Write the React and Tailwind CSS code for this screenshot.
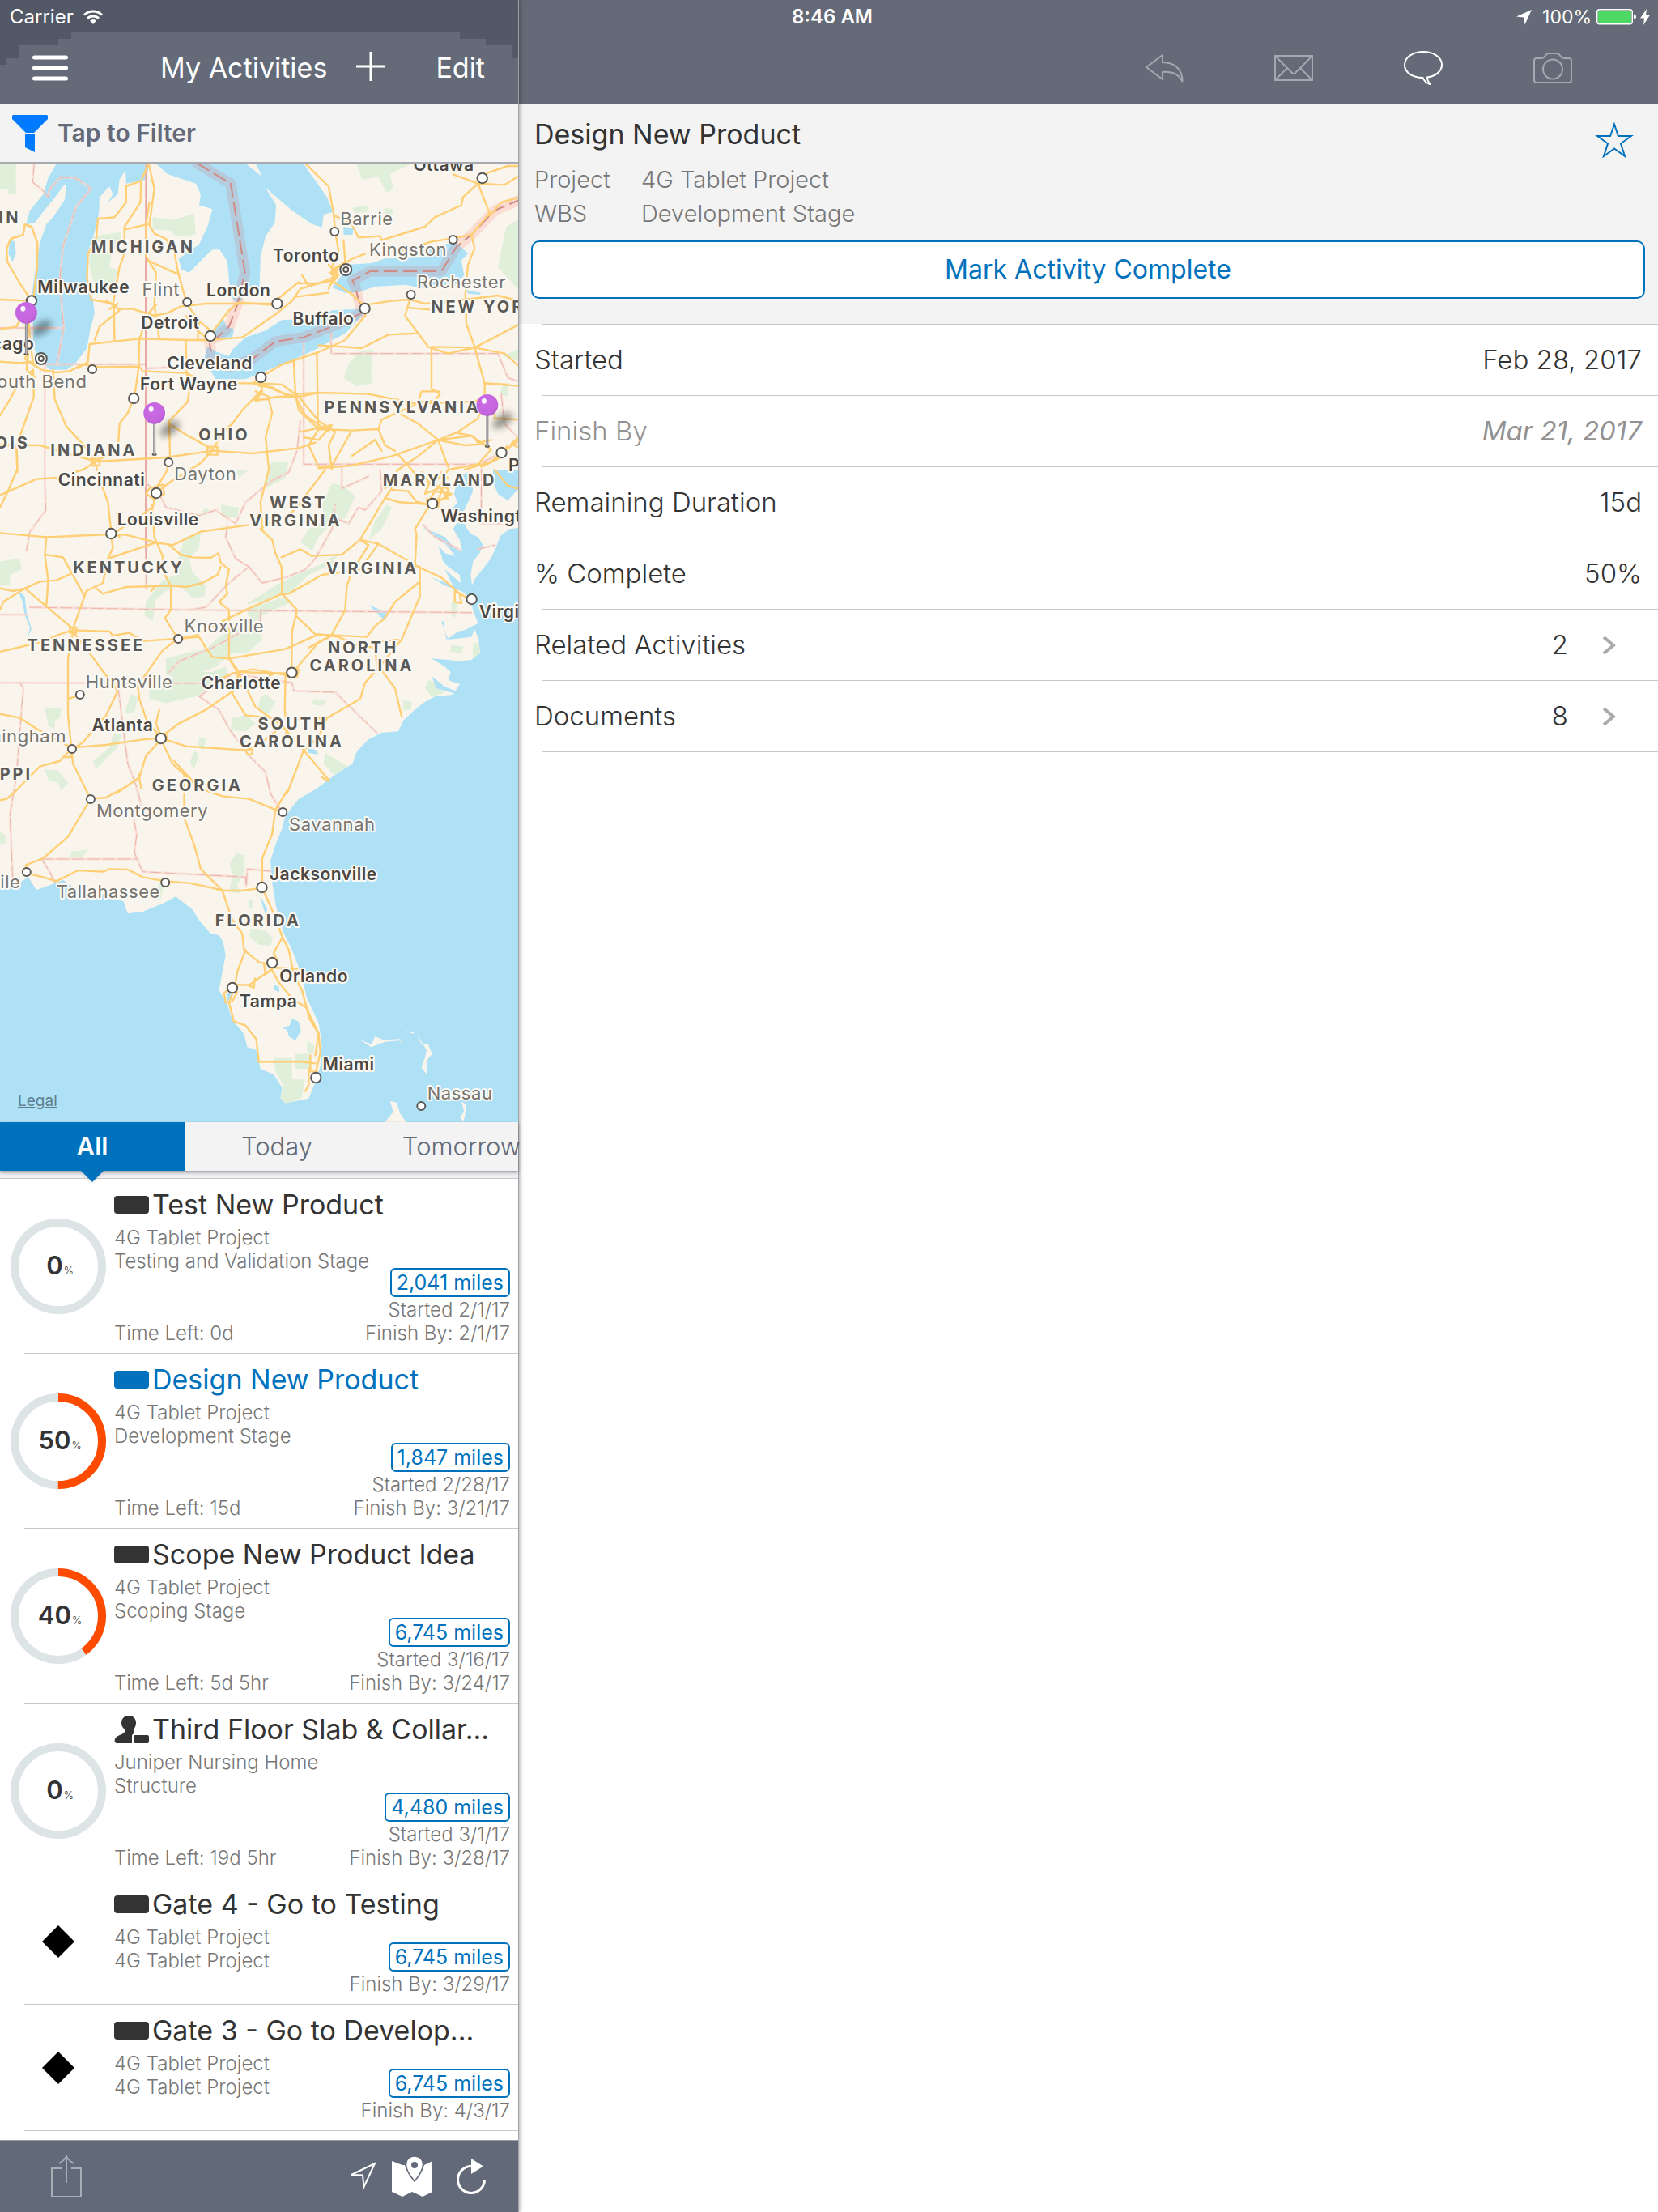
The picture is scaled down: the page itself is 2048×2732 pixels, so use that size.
import { useState } from 'react';

const TABS = ['All', 'Today', 'Tomorrow'];

const ACTIVITIES = [
  { id: 1, name: 'Test New Product', project: '4G Tablet Project', wbs: 'Testing and Validation Stage', percent: 0, distance: '2,041 miles', started: '2/1/17', finish: '2/1/17', timeLeft: '0d' },
  { id: 2, name: 'Design New Product', project: '4G Tablet Project', wbs: 'Development Stage', percent: 50, distance: '1,847 miles', started: '2/28/17', finish: '3/21/17', timeLeft: '15d' },
  { id: 3, name: 'Scope New Product Idea', project: '4G Tablet Project', wbs: 'Scoping Stage', percent: 40, distance: '6,745 miles', started: '3/16/17', finish: '3/24/17', timeLeft: '5d 5hr' },
  { id: 4, name: 'Third Floor Slab & Collar...', project: 'Juniper Nursing Home', wbs: 'Structure', percent: 0, distance: '4,480 miles', started: '3/1/17', finish: '3/28/17', timeLeft: '19d 5hr', assigned: true },
  { id: 5, name: 'Gate 4 - Go to Testing', project: '4G Tablet Project', wbs: '4G Tablet Project', milestone: true, distance: '6,745 miles', finish: '3/29/17' },
  { id: 6, name: 'Gate 3 - Go to Develop...', project: '4G Tablet Project', wbs: '4G Tablet Project', milestone: true, distance: '6,745 miles', finish: '4/3/17' },
];

const DETAILS = [
  { label: 'Started', value: 'Feb 28, 2017' },
  { label: 'Finish By', value: 'Mar 21, 2017', muted: true },
  { label: 'Remaining Duration', value: '15d' },
  { label: '% Complete', value: '50%' },
  { label: 'Related Activities', value: '2', link: true },
  { label: 'Documents', value: '8', link: true },
];

// Map geometry is kept in its own units, MAP_X / MAP_Y turn them into pixels
const MAP_X = 0.41;
const MAP_Y = 1 / 3;
const MAP_TOP = 36;
const px = (u) => u * MAP_X;
const py = (v) => (v - MAP_TOP) * MAP_Y;

const WATER = [
  // Atlantic and Gulf
  'M1566 1385 1535 1390 1508 1415 1492 1465 1478 1500 1460 1530 1440 1560 1428 1580 1422 1600 1418 1560 1425 1510 1445 1480 1455 1450 1440 1420 1420 1410 1402 1380 1395 1330 1410 1290 1425 1250 1420 1205 1405 1180 1390 1195 1375 1225 1368 1260 1378 1290 1360 1320 1380 1360 1365 1390 1385 1430 1392 1470 1370 1460 1340 1420 1305 1400 1275 1385 1310 1420 1345 1450 1372 1490 1340 1480 1320 1450 1335 1510 1350 1530 1385 1560 1388 1590 1340 1540 1365 1600 1300 1570 1340 1600 1390 1620 1415 1645 1425 1690 1440 1740 1400 1765 1380 1770 1345 1800 1335 1730 1330 1735 1350 1800 1420 1790 1430 1760 1442 1800 1447 1850 1420 1875 1380 1880 1350 1875 1300 1870 1340 1900 1358 1920 1350 1950 1385 1965 1372 1990 1340 1975 1300 1935 1315 1980 1370 2000 1360 2005 1310 2010 1275 2035 1245 2065 1215 2100 1200 2140 1150 2145 1110 2170 1075 2215 1062 2260 1010 2300 950 2355 900 2390 880 2420 858 2460 850 2500 830 2560 815 2620 820 2700 832 2790 852 2880 880 2950 905 3030 925 3130 960 3220 970 3300 965 3380 950 3440 930 3500 900 3508 860 3518 845 3500 850 3460 825 3412 785 3390 772 3320 745 3310 735 3260 700 3210 685 3150 660 3100 670 3030 680 2970 672 2920 660 2895 635 2890 600 2840 580 2800 530 2752 495 2775 430 2808 385 2815 372 2770 320 2745 240 2735 190 2690 150 2710 110 2728 85 2680 60 2700 0 2705V3590H1566Z',
  // Lake Michigan with Green Bay
  'M170 36 145 90 130 150 90 210 78 262 105 255 130 215 160 170 190 120 200 110 195 170 160 235 140 260 120 330 108 420 98 500 92 580 102 650 98 710 120 765 150 800 200 800 225 780 262 720 272 650 285 590 280 540 265 480 262 375 285 290 298 220 300 160 330 120 340 150 325 180 355 150 360 95 378 60 380 110 440 95 450 36Z',
  // Lake Huron and Georgian Bay
  'M470 36 505 75 590 110 605 150 600 190 640 205 625 270 600 335 560 370 538 390 548 430 570 440 610 390 640 355 662 355 685 400 695 530 722 560 740 500 782 495 785 380 800 305 828 255 832 190 800 125 880 210 940 260 970 272 975 225 1003 215 985 160 930 65 915 36H770L790 85 740 36Z',
  // Lake Erie
  'M625 715 612 770 640 815 650 835 740 835 800 805 880 765 950 725 1040 665 1098 590 1080 575 1000 580 960 612 850 615 800 655 740 680 700 725 690 750 655 735Z',
  'M640 660 672 610 682 640 705 650 700 680 650 680Z',
  // Lake Ontario
  'M1050 410 1120 405 1160 388 1265 385 1300 350 1370 325 1410 370 1390 395 1398 450 1370 488 1285 500 1220 485 1130 492 1080 512 1040 515 1000 495 1030 450Z',
  'M1035 270 1065 275 1062 300 1035 300Z',
  'M30 320 45 325 48 370 38 400 25 370Z',
  'M1405 505 1450 515 1445 522 1410 518Z',
  // Okeechobee and Tampa Bay
  'M880 3205 900 3215 907 3250 890 3285 870 3270 865 3245 850 3240 872 3230Z',
  'M682 3110 700 3105 700 3125 685 3140Z',
  'M825 3080 840 3085 842 3105 828 3100Z',
  // carolina and tennessee reservoirs
  'M925 2200 955 2210 958 2225 930 2220Z',
  'M55 1620 75 1640 80 1700 95 1760 85 1790 90 1755 75 1710 68 1660Z',
  'M785 2750 805 2800 800 2820 790 2780Z',
  'M1485 1170 1566 1170 1566 1235 1530 1285 1500 1260 1485 1215Z',
  'M1110 1670 1165 1700 1155 1725 1135 1700Z',
];

const ISLANDS = [
  'M1085 3283 1118 3310 1160 3290 1208 3285 1212 3310 1205 3280 1155 3283 1130 3270 1120 3300Z',
  'M1255 3260 1270 3300 1290 3300 1302 3335 1285 3360 1285 3410 1270 3385 1280 3350 1285 3320Z',
  'M1175 3510 1195 3515 1205 3555 1225 3590H1158L1185 3550Z',
  'M1390 3510 1405 3525 1400 3570 1395 3585 1385 3570 1398 3550Z',
  'M1220 3250 1248 3255 1245 3260Z',
];

const PARKS = [
  'M0 36H48V150H25V130H0Z',
  'M1075 36H1240L1175 75 1185 130 1165 145 1140 85 1090 95Z',
  'M460 235 520 245 585 222 590 300 530 305 515 285 460 280Z',
  'M280 305 365 290 360 345 330 355 335 380 330 420 355 430 340 500 280 470 268 400Z',
  'M1525 270 1566 240V510L1500 420Z',
  'M1062 200 1110 190 1105 215 1068 220Z',
  'M1158 200 1185 205 1182 225 1158 222Z',
  'M1085 730 1125 725 1118 790 1120 850 1075 860 1035 830 1050 780Z',
  'M820 1140 870 1140 860 1200 800 1240 800 1190Z',
  'M710 1170 750 1170 720 1200Z',
  'M1000 1220 1035 1230 1070 1270 1040 1350 990 1380 960 1420 940 1470 905 1440 930 1390 980 1360 970 1300Z',
  'M1165 1300 1180 1310 1150 1390 1110 1430 1130 1360Z',
  'M665 1300 720 1310 715 1350 670 1345Z',
  'M620 1310 632 1320 615 1340 605 1330Z',
  'M560 1420 605 1400 600 1460 570 1500 580 1550 620 1600 615 1640 580 1645 540 1600 500 1620 470 1650 460 1730 435 1710 440 1660 490 1580 530 1560 540 1480Z',
  'M0 1510 60 1500 65 1540 30 1560 30 1600 0 1600Z',
  'M1020 1480 1000 1520 930 1560 880 1620 820 1650 740 1670 830 1600 900 1555 960 1525Z',
  'M740 1690 860 1640 880 1660 790 1710 785 1730 760 1730Z',
  'M500 1870 560 1850 620 1835 660 1790 690 1770 730 1760 780 1740 790 1800 745 1850 700 1850 650 1900 590 1930 560 1950 500 1930Z',
  'M450 1980 560 1920 640 1920 680 1900 690 1950 640 1980 590 2010 500 2035 450 2020Z',
  'M395 2000 415 2015 405 2070 375 2075Z',
  'M135 2050 185 2055 180 2090 165 2100 165 2130 145 2120Z',
  'M340 2150 365 2150 355 2200 320 2240 290 2280 280 2250 330 2200Z',
  'M135 2280 175 2285 205 2330 185 2360 175 2330 145 2320Z',
  'M800 2000 830 2030 810 2075 775 2060 785 2015Z',
  'M700 2090 740 2080 770 2110 740 2140 695 2135Z',
  'M600 2160 622 2170 612 2210 598 2190Z',
  'M945 2020 985 2025 970 2045 940 2040Z',
  'M1290 1950 1335 1970 1335 2000 1300 2010 1280 1980Z',
  'M1215 2025 1240 2030 1238 2060 1215 2060Z',
  'M980 2220 1050 2270 1005 2300 975 2260Z',
  'M1425 1810 1445 1815 1445 1860 1425 1865Z',
  'M1360 1820 1395 1825 1390 1850 1355 1845Z',
  'M1360 1660 1380 1665 1370 1720 1360 1710Z',
  'M585 2210 600 2225 585 2280 572 2255Z',
  'M712 2590 735 2600 735 2665 715 2710 725 2740 690 2735 700 2680 692 2630Z',
  'M748 2760 763 2765 760 2795 748 2790Z',
  'M215 2585 265 2578 245 2610 212 2605Z',
  'M755 2870 800 2880 822 2905 815 2935 780 2930 752 2900Z',
  'M825 3350H880V3430H918L910 3495 870 3518 845 3510 852 3450 830 3400Z',
  'M890 3335H932V3390H890Z',
  'M925 3285 948 3305 942 3340 925 3325Z',
  'M480 2700 492 2715 485 2760 462 2770Z',
  'M0 2510 18 2525V2555H0Z',
  'M1512 860 1530 850 1530 900 1505 890Z',
  'M1515 750 1566 720V770Z',
];

const ROADS = [
  // great lakes west
  'M75 262 95 270 113 330 112 420 100 540 85 600 90 690 100 780 125 800 170 810 210 805 250 780 300 790 420 788 430 805 560 812 590 830',
  'M75 262 70 300 32 315 20 350 22 400 60 480 95 545 65 600 50 640 0 650',
  'M0 540 95 545 M0 770 60 775 100 770 M100 800 60 840 30 910 0 970 M100 800 102 900 85 960 50 1080 52 1170 20 1260 0 1310',
  'M160 800 165 910 200 1010 260 1090 285 1140 310 1240 325 1290 335 1400',
  'M270 705 265 770 235 795 M270 705 420 685 570 690 630 690 730 680 835 590 880 545 905 500 960 480 1000 470',
  'M345 690 343 560 320 550 275 540 262 460 265 370 290 315 295 240 345 235 380 180 380 120 425 100 448 36 465 130 450 260 375 280',
  'M425 100 423 180 375 270 375 370 360 420 340 560 360 575 400 575 465 600 505 590 545 565 620 555 820 555 900 475 M450 180 440 260 440 380 470 440 465 560 480 685',
  'M448 260 465 295 500 315 525 360 535 430 550 500 565 560 600 620 640 660 M445 395 535 445 M640 660 690 580 720 550 820 560',
  'M560 690 562 800 570 880 565 920 510 990 512 1120 M420 680 418 790 405 900 385 960 360 1000 355 1100 285 1140',
  'M600 620 595 690 630 690 590 650 560 600 M470 560 440 600 430 650 420 690',
  'M320 545 345 560 360 580 340 600 300 640 285 690 M330 575 355 555',
  'M85 740 80 800 105 830 M95 700 75 760 110 790 M52 1080 0 1078 M50 1080 52 1180',
  // ontario
  'M920 36 990 120 1005 220 1010 290 1020 360 1000 420 1005 460 990 500 M1035 320 1040 400 1010 430 1000 470 1060 520 1095 560 M1010 230 1060 260 1080 310 1145 305 1150 320 1280 270 1310 235 1390 190 1395 160 1440 110',
  'M1365 76 1440 110 1520 115 1566 80 M1440 110 1475 220 1420 300 1370 312 1300 325 1250 345 1190 365 M1440 110 1470 70 1530 45 1566 45 M1566 160 1510 180 1475 230',
  'M1000 430 1060 390 1100 370 M1000 460 960 480 900 480 M990 515 890 530 M1420 300 1430 350 1410 410 1402 520 1405 630 1430 715',
  'M990 410 1020 450 1000 480 M910 450 930 490 M995 440 1015 430 1010 460Z',
  // new york and pennsylvania
  'M785 828 850 780 960 735 1040 690 1100 600 1100 560 1180 545 1235 540 1280 555 1400 540 1500 525 1566 545',
  'M1235 540 1220 600 1260 665 1290 715 1350 740 1430 718 1520 740 1566 790 M1260 665 1170 670 1090 720 1000 712 960 710 M1566 630 1490 680 1430 718 1460 850 1560 860',
  'M1430 718 1300 715 M1300 715 1300 870 1325 890 1310 915 1260 920 1270 880 1325 880 M885 770 890 890 960 885 1110 890 1250 925 1400 920 1460 910 1460 850 1530 855',
  'M955 735 958 1020 M960 1020 1060 1025 1140 1020 1150 985 1250 930 M890 890 900 950 960 1020 930 1080 960 1160 1000 1155 1060 1025',
  'M1460 910 1440 980 1380 1030 1320 1060 1260 1000 1200 960 M1320 1060 1420 1045 1480 1095 M1320 1060 1350 1160 M1320 1060 1260 1120 1200 1170 1160 1240 M1140 1020 1160 1080 1190 1100',
  'M1320 1060 1180 1120 1060 1155 960 1165 M1490 920 1490 980 1566 985 M1480 1095 1440 1150 1350 1170 1320 1240 M1566 1060 1520 1100 1480 1140 1400 1170',
  'M890 900 920 970 990 1030 M905 1030 1000 1005 960 1060 915 1050 M1230 570 1300 578 M1060 1120 1130 1060 1150 1100 M1320 1060 1400 1080 1460 1075 M1380 1035 1425 1045 1440 1070 1480 1060',
  'M1566 1045 1540 1075 1566 1090 M1530 1080 1500 1130 1450 1160 M1200 1115 1240 1170 1260 1200',
  // ohio
  'M785 828 760 850 800 860 860 890 900 900 960 885 M785 828 790 880 770 915 835 900 895 900 M785 880 730 950 700 1000 670 1030 640 1100 M765 910 810 910 820 960 800 1050 810 1170 785 1290 790 1390',
  'M720 850 780 850 850 855 900 900 960 990 1010 1030 990 1080 1000 1170 M0 1078 120 1080 290 1140 500 1125 640 1100 760 1110 900 1090 950 1070',
  'M510 1000 560 1040 640 1095 M500 1125 505 1170 475 1230 470 1260 M640 1100 600 1150 520 1210 475 1250 M290 1140 250 1170 170 1200 110 1205 0 1265',
  'M625 1085 655 1085 655 1115 625 1115Z M275 1130 300 1130 300 1155 275 1155Z',
  'M450 1240 490 1225 495 1260 465 1280 440 1260Z M780 860 820 865 870 900 M770 880 810 900',
  // kentucky
  'M0 1405 140 1420 330 1410 380 1412 470 1440 520 1450 605 1400 750 1375 M470 1260 460 1310 350 1400 M458 1300 465 1420 490 1490 492 1550 515 1600 515 1690 497 1720 535 1795',
  'M510 1450 545 1485 580 1495 635 1497 658 1480 665 1515 690 1540 680 1600 685 1630 660 1660 690 1690 690 1720 M335 1410 340 1460 325 1500 310 1590 260 1620 220 1760 M325 1500 470 1440',
  'M665 1530 655 1560 610 1590 560 1605 515 1600 380 1605 310 1630 290 1610 M135 1485 190 1495 255 1640 M140 1420 135 1485 145 1580 140 1670 M0 1610 40 1620 75 1610 120 1585 170 1580 215 1555',
  'M75 1610 220 1760 M75 1610 10 1660 0 1690 M785 1390 820 1430 830 1480 848 1530 850 1630 895 1690 880 1770 878 1925 M848 1495 905 1465 940 1490 1030 1485 1085 1430 1160 1275 1180 1240',
  'M785 1390 810 1370 870 1340 900 1300 980 1170 M455 1620 470 1600 M340 1390 360 1420',
  // virginia
  'M1085 1430 1140 1445 1260 1530 1330 1570 1385 1630 1415 1650 M1085 1430 1110 1450 1060 1550 1045 1600 1040 1690 1000 1780 M1250 1530 1255 1410 1250 1390 1285 1320 1300 1300 1200 1290 1160 1275',
  'M1180 1245 1230 1250 1255 1290 1300 1300 1360 1260 1310 1250 1290 1290 M1320 1300 1330 1240 1350 1280 M1140 1445 1085 1540 970 1560 870 1630 850 1630 740 1690 690 1720 620 1760 590 1785 540 1797',
  'M1260 1590 1190 1660 1160 1720 1130 1750 1105 1790 950 1780 890 1710 M1265 1530 1265 1640 1210 1800 1150 1890 M1370 1620 1385 1630 1390 1665 1370 1660Z',
  'M1350 1200 1300 1200 1280 1260 1320 1240 M1490 1170 1530 1230 1560 1240',
  'M1310 1230 1350 1240 1345 1275 1320 1285 M1330 1180 1300 1230 1270 1180 M1285 1280 1320 1280 1320 1310 1290 1310Z',
  // tennessee and carolinas
  'M0 1845 120 1810 180 1780 220 1765 330 1770 340 1785 390 1775 430 1805 535 1797 600 1790 620 1830 640 1865 690 1870 860 1835 960 1780',
  'M220 1770 205 1870 205 2080 215 2200 M220 1770 270 1850 330 1950 355 1990 320 2080 250 2180 215 2210 M535 1797 490 1840 415 1970 420 2020 445 2110 485 2160 M205 2020 240 2005',
  'M690 1720 690 1870 720 1920 830 1925 880 1925 M880 1925 960 1810 1000 1785 M960 1780 1020 1790 1070 1820 1130 1830 1135 1890 1190 1980 1210 2085 M1200 1800 1130 1810',
  'M720 1920 700 2000 740 2080 820 2090 M690 1870 730 1950 770 2050 850 2120 915 2210 990 2320 M860 1925 858 2060 865 2140 855 2160 M880 1925 830 1925 720 1975 620 2060 540 2110 485 2160',
  'M1150 1890 1100 1960 1085 2020 1000 2080 985 2090 900 2095 M985 2090 960 2160 915 2210 865 2370 M850 2120 790 2180 750 2210 M480 2060 470 2110 485 2160 M930 1830 990 1790',
  'M640 1960 700 1925 760 1910 880 1935 M210 1755 230 1755 230 1775 210 1775Z M870 1910 900 1910 895 1940 870 1940Z',
  // georgia and alabama
  'M0 2075 60 2090 110 2130 215 2200 320 2190 430 2170 485 2165 560 2195 740 2210 M485 2170 440 2230 420 2310 350 2370 M485 2170 520 2260 600 2350 670 2380 750 2390 850 2440',
  'M215 2205 180 2250 120 2270 40 2370 20 2390 0 2395 M215 2205 220 2260 273 2390 320 2385 380 2345 M273 2390 205 2530 130 2610 78 2635 78 2660 M555 2300 555 2460 585 2560 605 2650 670 2730',
  'M418 2300 425 2350 M865 2360 830 2430 820 2520 790 2610 790 2710 M78 2665 130 2680 170 2695 235 2655 310 2660 330 2650 385 2652 430 2680 498 2695 570 2702 640 2720 670 2730 730 2730 790 2720',
  'M525 2250 600 2350 M740 2205 760 2205 760 2225 745 2225Z M970 2310 990 2325',
  'M470 2150 500 2150 505 2175 480 2185Z M190 2235 215 2235 215 2215',
  // florida
  'M670 2730 700 2840 730 2890 735 2950 780 2995 820 3005 M740 2950 715 3030 705 3100 M790 2720 830 2830 850 2900 870 2950 885 3040 910 3100 925 3170 960 3260 965 3330 950 3410 M850 2905 825 2960 835 2990 820 3000',
  'M820 3020 750 3080 705 3078 M820 3025 840 3070 880 3130 925 3165 930 3200 960 3260 950 3340 M820 3015 895 3020 M710 3080 690 3145 705 3215 740 3230 772 3280 780 3365 900 3363 950 3370',
  'M705 3080 675 3110 680 3145 700 3140 715 3105 M935 3340V3400H955 M930 3390 930 3450 920 3473 M795 3000 800 3040 820 3020 M745 3080 765 3090 768 3055',
];

const BORDERS = [
  'M103 36 98 105 125 130 145 160 150 130 182 88 225 88 275 128 230 195 190 340 180 470 192 645 172 780',
  'M0 645H192 M135 780H440V1000 440 1200 430 1300 370 1330 350 1400 300 1440 265 1420 240 1465 215 1460 190 1490 100 1475 70 1500 75 1540 35 1560 30 1610 M135 780V1220L138 1320 90 1400 80 1470',
  'M440 795 500 792 M998 640V740H1500L1530 830 1566 845 M915 680V1150H1440L1475 1130 1566 1060 M905 990 895 1100 870 1180 820 1210 740 1290 710 1370 650 1320 600 1340 500 1310 480 1260 440 1220',
  'M685 1380 680 1420 710 1500 750 1530 690 1590 620 1680 570 1690 M750 1530 790 1590 860 1570 920 1540 950 1500 1000 1390 1010 1300 M1030 1150V1240L1110 1195 M1010 1350 1050 1370 1080 1310 1100 1320 1150 1250 1145 1170',
  'M90 1680 570 1690 1420 1700 M0 1708H80 M785 1695V1730L700 1790 640 1830 540 1880 510 1920 M0 1960 620 1962 M355 1970 385 2260 410 2340 425 2410 402 2460 412 2520 405 2590 430 2660 740 2680 742 2715 745 2650 815 2658',
  'M60 1960 70 1980 50 2300 30 2450 38 2680 M600 2010 650 1970 700 1925 880 1960 885 1990 1010 1995 1135 2145 M600 2010 660 2060 690 2130 750 2230 800 2290 815 2370 845 2430',
  'M125 2613H415 M125 2613 150 2660 165 2700 M1450 1170V1370H1520 M1275 1375 1310 1420 1390 1470 M1440 1465 1490 1450 M1510 890 1520 1000 1566 1060',
];

const SHORE_BORDERS = 'M595 36 695 110 720 300 738 440 715 560 690 640 655 680 630 690 635 730 M635 760 690 790 760 760 830 695 915 680 1000 640 1090 590 1070 490 1062 470 1115 435H1330L1375 345 1420 300 1490 210 1566 170';

// [text, u, v, kind, anchor]
const LABELS = [
  ['Ottawa', 1245, 62, 'city'], ['Barrie', 1025, 265, 'town'], ['Toronto', 822, 398, 'city'], ['Kingston', 1112, 378, 'town'],
  ['Milwaukee', 113, 517, 'city'], ['Flint', 428, 525, 'town'], ['London', 622, 528, 'city'], ['Rochester', 1256, 497, 'town'],
  ['Detroit', 425, 648, 'city'], ['Buffalo', 882, 634, 'city'], ['Chicago', 103, 727, 'city', 'end'], ['South Bend', 262, 867, 'town', 'end'],
  ['Cleveland', 503, 799, 'city'], ['Fort Wayne', 422, 877, 'city'], ['Dayton', 525, 1208, 'town'], ['Cincinnati', 175, 1230, 'city'],
  ['Louisville', 353, 1378, 'city'], ['Washington', 1328, 1364, 'city'], ['Virginia Beach', 1443, 1719, 'city'], ['Knoxville', 555, 1772, 'town'],
  ['Huntsville', 258, 1980, 'town'], ['Charlotte', 607, 1983, 'city'], ['Atlanta', 277, 2138, 'city'], ['Birmingham', 200, 2180, 'town', 'end'],
  ['Montgomery', 290, 2458, 'town'], ['Savannah', 871, 2507, 'town'], ['Jacksonville', 812, 2690, 'city'], ['Mobile', 62, 2720, 'town', 'end'],
  ['Tallahassee', 170, 2757, 'town'], ['Orlando', 842, 3069, 'city'], ['Tampa', 722, 3161, 'city'], ['Miami', 972, 3395, 'city'],
  ['Nassau', 1287, 3503, 'town'], ['Philadelphia', 1532, 1175, 'city'],
  ['WISCONSIN', 62, 258, 'state', 'end'], ['MICHIGAN', 275, 367, 'state'], ['NEW YORK', 1298, 587, 'state'], ['PENNSYLVANIA', 977, 960, 'state'],
  ['OHIO', 598, 1063, 'state'], ['ILLINOIS', 90, 1092, 'state', 'end'], ['INDIANA', 152, 1118, 'state'], ['MARYLAND', 1153, 1230, 'state'],
  ['WEST', 812, 1313, 'state'], ['VIRGINIA', 752, 1379, 'state'], ['KENTUCKY', 220, 1554, 'state'], ['VIRGINIA', 983, 1557, 'state'],
  ['TENNESSEE', 82, 1841, 'state'], ['NORTH', 988, 1850, 'state'], ['CAROLINA', 933, 1916, 'state'], ['SOUTH', 777, 2134, 'state'],
  ['CAROLINA', 722, 2200, 'state'], ['MISSISSIPPI', 98, 2320, 'state', 'end'], ['GEORGIA', 458, 2360, 'state'], ['FLORIDA', 648, 2862, 'state'],
];

const LABEL_STYLES = {
  city: 'fill-[#4a4744] text-[21px] font-semibold tracking-wide',
  town: 'fill-[#76746f] text-[22px] tracking-wide',
  state: 'fill-[#5b5955] text-[20px] font-bold tracking-[3px]',
};

const BIG_DOTS = [[1453, 90], [95, 544], [835, 555], [1099, 573], [634, 675], [786, 828], [403, 906], [1511, 1107], [471, 1257], [1303, 1296], [335, 1407], [1421, 1650], [879, 1922], [485, 2166], [789, 2718], [820, 2997], [700, 3090], [952, 3423]];
const SMALL_DOTS = [[1008, 288], [1365, 318], [564, 549], [1238, 522], [278, 798], [508, 1143], [537, 1797], [241, 2004], [217, 2205], [273, 2391], [852, 2439], [80, 2661], [498, 2700], [1269, 3528]];
const RING_DOTS = [[1042, 429], [124, 759]];
const PINS = [[79, 589], [465, 961], [1468, 931]];

function ActivityMap() {
  return (
    <div className="relative h-[1184px] shrink-0 overflow-hidden bg-[#aee1f6]">
      <svg viewBox="0 0 640 1184" preserveAspectRatio="xMidYMid slice" className="block h-full w-full" role="img" aria-label="Map of activities">
        <defs>
          <filter id="soft" x="-50%" y="-50%" width="200%" height="200%">
            <feGaussianBlur stdDeviation="4" />
          </filter>
          <clipPath id="water">
            <path d={WATER.join(' ')} />
          </clipPath>
          <radialGradient id="pin" cx="0.45" cy="0.4" r="0.6">
            <stop offset="0" stopColor="#c96be4" />
            <stop offset="0.8" stopColor="#c566df" />
            <stop offset="1" stopColor="#b45bd0" />
          </radialGradient>
        </defs>
        <g transform={`scale(${MAP_X} ${MAP_Y}) translate(0 ${-MAP_TOP})`} fill="none" strokeLinejoin="round" strokeLinecap="round">
          <path d="M0 30H1570V3590H0Z" fill="#f9f5ec" />
          <path d={PARKS.join(' ')} fill="#dfefda" />
          <path d={SHORE_BORDERS} stroke="#fadcd3" strokeWidth="13" vectorEffect="non-scaling-stroke" />
          <path d={WATER.join(' ')} fill="#aee1f6" />
          <path d={ISLANDS.join(' ')} fill="#f9f5ec" />
          {BORDERS.map((d) => (
            <g key={d}>
              <path d={d} stroke="#f9d9d0" strokeWidth="3" strokeOpacity="0.7" vectorEffect="non-scaling-stroke" />
              <path d={d} stroke="#e9a9a3" strokeWidth="1" strokeOpacity="0.8" strokeDasharray="14 5" vectorEffect="non-scaling-stroke" />
            </g>
          ))}
          <g clipPath="url(#water)">
            <path d={SHORE_BORDERS} stroke="#b5cbdc" strokeWidth="13" vectorEffect="non-scaling-stroke" />
          </g>
          <path d={SHORE_BORDERS} stroke="#cf8b87" strokeWidth="2" strokeDasharray="16 8" vectorEffect="non-scaling-stroke" />
          {ROADS.map((d) => (
            <path key={d} d={d} stroke="#ffcf75" strokeWidth="2.4" vectorEffect="non-scaling-stroke" />
          ))}
        </g>
        <g fill="#fff" stroke="#5b5955" strokeWidth="2">
          {BIG_DOTS.map(([u, v]) => <circle key={`${u}-${v}`} cx={px(u)} cy={py(v)} r="6.2" />)}
          {SMALL_DOTS.map(([u, v]) => <circle key={`${u}-${v}`} cx={px(u)} cy={py(v)} r="5" />)}
          {RING_DOTS.map(([u, v]) => (
            <g key={`${u}-${v}`}>
              <circle cx={px(u)} cy={py(v)} r="7" />
              <circle cx={px(u)} cy={py(v)} r="3" />
            </g>
          ))}
        </g>
        <g stroke="#fbf9f4" strokeWidth="4" strokeLinejoin="round" paintOrder="stroke">
          {LABELS.map(([text, u, v, kind, anchor]) => (
            <text key={`${text}-${v}`} x={px(u)} y={py(v)} textAnchor={anchor || 'start'} className={LABEL_STYLES[kind]}>{text}</text>
          ))}
        </g>
        {PINS.map(([u, v]) => (
          <g key={u} transform={`translate(${px(u)} ${py(v)})`}>
            <ellipse cx="19" cy="19" rx="14" ry="7" fill="#000" fillOpacity="0.4" filter="url(#soft)" transform="rotate(-35 19 19)" />
            <ellipse cx="0" cy="51" rx="3" ry="1.5" fill="#55534f" />
            <path d="M0 12V51" stroke="#8d8c92" strokeWidth="3" />
            <path d="M0 12V51" stroke="#b9b8bd" strokeWidth="1" />
            <circle r="13.4" fill="url(#pin)" />
            <ellipse cx="-4" cy="-5" rx="3" ry="3.4" fill="#fff" fillOpacity="0.95" />
          </g>
        ))}
      </svg>
      <a href="#legal" className="absolute bottom-[14px] left-[22px] text-[19px] leading-6 text-[#5f7f8c] underline">Legal</a>
    </div>
  );
}

function StatusBar() {
  return (
    <div className="absolute inset-x-0 top-0 z-10 grid h-[42px] grid-cols-3 items-center text-[24px] leading-10 text-white">
      <div className="flex items-center gap-3 pl-3">
        <span>Carrier</span>
        <svg width="24" height="18" viewBox="0 0 24 18" fill="none" stroke="#fff" strokeWidth="3">
          <path d="M1 6.5a15.5 15.5 0 0 1 22 0" />
          <path d="M5 10.8a10 10 0 0 1 14 0" />
          <path d="M12 18 8 13.6a5.6 5.6 0 0 1 8 0Z" fill="#fff" stroke="none" />
        </svg>
      </div>
      <span className="pl-2 text-center font-semibold">8:46 AM</span>
      <div className="flex items-center justify-end pr-[10px]">
        <svg width="20" height="19" viewBox="0 0 20 19" fill="#fff" className="mr-3">
          <path d="M19 0 10.5 18.5 9.5 9.5 0 8.5Z" />
        </svg>
        <span className="mr-[6px] text-[23px]">100%</span>
        <svg width="50" height="20" viewBox="0 0 50 20" className="mr-1">
          <rect x="0.75" y="0.75" width="43.5" height="18" rx="3" fill="none" stroke="#fff" strokeWidth="1.5" />
          <rect x="2" y="2" width="41" height="15.500" rx="2" fill="#4fd964" />
          <path d="M46 6.500c4 .5 4 6 0 6.500Z" fill="#fff" />
        </svg>
        <svg width="12" height="20" viewBox="0 0 12 20" fill="#fff">
          <path d="M8 0 0 11.500h5L4 20 12 7.500H7Z" />
        </svg>
      </div>
    </div>
  );
}

function ProgressRing({ percent }) {
  const length = 2 * Math.PI * 54;
  return (
    <div className="relative flex size-[118px] items-center justify-center">
      <svg viewBox="0 0 118 118" className="absolute inset-0" fill="none" strokeWidth="10">
        <circle cx="59" cy="59" r="54" stroke="#dce4e6" />
        {percent > 0 && (
          <circle cx="59" cy="59" r="54" stroke="#ff4b00" strokeDasharray={`${(length * percent) / 100} ${length}`} transform="rotate(-90 59 59)" />
        )}
      </svg>
      <span className="relative flex items-baseline pt-1 pl-1 text-[31px] font-semibold leading-10 text-[#333]">
        {percent}
        <span className="pl-px text-[13px] font-light">%</span>
      </span>
    </div>
  );
}

function ActivityRow({ activity, selected, onSelect }) {
  return (
    <li className={activity.milestone ? 'h-[156px]' : 'h-[216px]'}>
      <button type="button" onClick={onSelect} className="flex h-full w-full text-left text-[24px] font-light leading-[29px] text-[#777]">
        <span className="flex h-full w-[141px] shrink-0 items-center justify-center pl-[3px]">
          {activity.milestone ? (
            <svg width="40" height="40" viewBox="0 0 40 40"><path d="M20 0 40 20 20 40 0 20Z" /></svg>
          ) : (
            <ProgressRing percent={activity.percent} />
          )}
        </span>
        <span className="relative flex h-full min-w-0 flex-1 flex-col pt-[11px] pb-[11px]">
          <span className={selected ? 'flex items-center gap-1 text-[#0072bd]' : 'flex items-center gap-1 text-[#333]'}>
            {activity.assigned ? (
              <svg width="43" height="36" viewBox="0 0 43 36" fill="currentColor" className="shrink-0">
                <path d="M18 1c6 0 9 4 9 9 0 4-2 6-3 9-.5 2 .5 3 2 3.500-3 .5-4 2-4 4V35H4c-3 0-4-2-3-5 1-4 7-5 10-7 3-2 3-4 1-6-2-2-3-4-3-7 0-5 3-9 9-9Z" />
                <rect x="24" y="25" width="19" height="10" rx="2" />
              </svg>
            ) : (
              <span className="h-[22px] w-[43px] shrink-0 rounded bg-current" />
            )}
            <span className="truncate text-[34px] font-normal leading-[42px]">{activity.name}</span>
          </span>
          <span className="mt-[5px] block">{activity.project}</span>
          <span>{activity.wbs}</span>
          {activity.timeLeft && <span className="mt-auto">Time Left: {activity.timeLeft}</span>}
          <span className="absolute right-[10px] bottom-[11px] flex flex-col items-end">
            <span className="mb-px rounded-md border-2 border-[#0072bd] px-[6px] text-[25px] font-normal leading-8 text-[#0072bd]">{activity.distance}</span>
            {activity.started && <span>Started {activity.started}</span>}
            <span>Finish By: {activity.finish}</span>
          </span>
        </span>
      </button>
      <div className="-mt-px ml-[30px] h-px bg-[#c8c7cc]" />
    </li>
  );
}

function Sidebar() {
  const [tab, setTab] = useState('All');
  const [selectedId, setSelectedId] = useState(2);

  return (
    <aside className="z-[1] flex w-[641px] shrink-0 flex-col border-r border-[#a2a3a8] bg-white shadow-[2px_0_4px_rgba(0,0,0,0.25)]">
      <header className="relative h-[129px] shrink-0 border-b border-[#96979b] bg-[#646a78] text-white">
        <svg viewBox="0 0 640 128" preserveAspectRatio="none" className="absolute inset-0 h-full w-full">
          <path d="M0 0H640V72H632V56H600V48H568V40H88V48H72V56H24V72H8V80H0Z" fill="#525866" />
        </svg>
        <div className="relative flex h-full items-center pt-10 pr-[41px] pl-10 text-[34px] leading-[88px]">
          <button type="button" aria-label="Menu">
            <svg width="44" height="34" viewBox="0 0 44 34" stroke="#fff" strokeWidth="5" strokeLinecap="round">
              <path d="M2.500 4H41.500M2.500 17H41.500M2.500 30H41.500" />
            </svg>
          </button>
          <h1 className="ml-auto">My Activities</h1>
          <button type="button" aria-label="Add activity" className="ml-9 pb-1">
            <svg width="36" height="36" viewBox="0 0 36 36" stroke="#fff" strokeWidth="3"><path d="M18 0V36M0 18H36" /></svg>
          </button>
          <button type="button" className="ml-[62px]">Edit</button>
        </div>
      </header>

      <button type="button" className="flex h-[73px] shrink-0 items-center gap-3 border-b-2 border-[#a6a9b0] bg-[#f3f3f3] pl-[15px] text-[30px] font-semibold text-[#646a78]">
        <svg width="44" height="46" viewBox="0 0 44 46" fill="#007aff">
          <path d="M1 0H43L44 1V5L27 22H17L0 5V1Z" />
          <path d="M16 24H28V46L16 40Z" />
        </svg>
        Tap to Filter
      </button>

      <ActivityMap />

      <div className="h-[70px] shrink-0 border-b border-[#c8c7cc] bg-[#efeff4]">
        <div role="tablist" className="relative flex h-[60px] bg-[#f3f3f3] text-[31px] font-light text-[#646a78] shadow-[0_2px_4px_rgba(0,0,0,0.35)]">
          {TABS.map((name) => (
            <button
              key={name}
              type="button"
              role="tab"
              aria-selected={tab === name}
              onClick={() => setTab(name)}
              className={tab === name ? 'relative w-[228px] shrink-0 bg-[#0072bd] font-semibold text-white' : 'w-[228px] shrink-0 text-center'}
            >
              {name}
              {tab === name && (
                <svg width="28" height="14" viewBox="0 0 28 14" className="absolute top-full left-[100px] drop-shadow-sm"><path d="M0 0H28L14 14Z" fill="#0072bd" /></svg>
              )}
            </button>
          ))}
        </div>
      </div>

      <ul className="min-h-0 flex-1 overflow-hidden">
        {ACTIVITIES.map((activity) => (
          <ActivityRow key={activity.id} activity={activity} selected={activity.id === selectedId} onSelect={() => setSelectedId(activity.id)} />
        ))}
      </ul>

      <footer className="flex h-[89px] shrink-0 items-center border-t border-[#9b9da3] bg-[#626978] pr-10 pl-[62px]">
        <button type="button" aria-label="Share">
          <svg width="40" height="52" viewBox="0 0 40 52" fill="none" stroke="#a9adb6" strokeWidth="2">
            <path d="M14 16H2V51H38V16H26M20 34V2M11 10C14 8 18 6 20 1 22 6 26 8 29 10" />
          </svg>
        </button>
        <button type="button" aria-label="Current location" className="ml-auto">
          <svg width="34" height="36" viewBox="0 0 34 36" fill="none" stroke="#fff" strokeWidth="2">
            <path d="M32 2 18.500 31 17 16.500 3 16Z" />
          </svg>
        </button>
        <button type="button" aria-label="Map" className="ml-[19px]">
          <svg width="50" height="50" viewBox="0 0 50 50" fill="#fff">
            <path d="M0 6 13 11 16 11C18 18 22 25 28 32 34 25 38 18 40 11L50 6V44L38 50 25 44 13 50 0 44Z" />
            <path d="M28 0C34 0 38.500 4 38.500 10 38.500 17 33 25 28 31 23 25 17.500 17 17.500 10 17.500 4 22 0 28 0Z" stroke="#626978" strokeWidth="1.500" />
            <circle cx="28" cy="11" r="4" fill="#626978" />
          </svg>
        </button>
        <button type="button" aria-label="Refresh" className="ml-[30px]">
          <svg width="36" height="44" viewBox="0 0 36 44">
            <path d="M34.500 26A16.500 16.500 0 1 1 18 9.500" fill="none" stroke="#fff" strokeWidth="3" />
            <path d="M18 0 33 9.500 18 19Z" fill="#fff" />
          </svg>
        </button>
      </footer>
    </aside>
  );
}

function DetailPane() {
  return (
    <main className="flex min-w-0 flex-1 flex-col bg-white text-[#333]">
      <header className="flex h-[129px] shrink-0 items-center justify-end gap-28 border-b border-[#96979b] bg-[#646a78] pt-10 pr-[106px]">
        <button type="button" aria-label="Reply">
          <svg width="48" height="38" viewBox="0 0 48 38" fill="none" stroke="#a4a8b1" strokeWidth="2">
            <path d="M22 3 2 18 22 33V24C34 23 42 26 46.500 36 47 22 38 12 22 12Z" />
          </svg>
        </button>
        <button type="button" aria-label="Mail">
          <svg width="48" height="32" viewBox="0 0 48 32" fill="none" stroke="#a4a8b1" strokeWidth="2">
            <path d="M1 1H47V31H1ZM1 1 22 22C23.500 23.500 24.500 23.500 26 22L47 1M1 31 16 16M47 31 32 16" />
          </svg>
        </button>
        <button type="button" aria-label="Comments">
          <svg width="48" height="42" viewBox="0 0 48 42" fill="none" stroke="#fff" strokeWidth="2">
            <path d="M24 1C37 1 47 8 47 17 47 25 39 31.500 29 32.500 29 36 30.500 39 33.500 41.500 28 40 25 37 23.500 33 10 33 1 26 1 17 1 8 11 1 24 1Z" />
          </svg>
        </button>
        <button type="button" aria-label="Camera">
          <svg width="48" height="38" viewBox="0 0 48 38" fill="none" stroke="#a4a8b1" strokeWidth="2">
            <path d="M4 7H10C13 7 14 5 15.500 3 16.500 1.500 17 1 19 1H29C31 1 31.500 1.500 32.500 3 34 5 35 7 38 7H44C46 7 47 8 47 10V34C47 36 46 37 44 37H4C2 37 1 36 1 34V10C1 8 2 7 4 7Z" />
            <circle cx="24" cy="20.500" r="12" />
          </svg>
        </button>
      </header>

      <section className="relative h-[271px] shrink-0 bg-[#f3f3f3] pt-4 pr-4 pl-[15px]">
        <h2 className="pl-1 text-[34px] leading-[42px]">Design New Product</h2>
        <button type="button" aria-label="Favorite" className="absolute top-[21px] right-[30px]">
          <svg width="48" height="46" viewBox="0 0 48 46" fill="none" stroke="#0072bd" strokeWidth="2">
            <path d="M24 3.500 28.900 18H45L32 27.300 37 43 24 33.500 11 43 16 27.300 3 18H19.100Z" />
          </svg>
        </button>
        <dl className="mt-[14px] grid grid-cols-[132px_1fr] pl-1 text-[29px] font-light leading-[42px] text-[#777]">
          <dt>Project</dt>
          <dd>4G Tablet Project</dd>
          <dt>WBS</dt>
          <dd>Development Stage</dd>
        </dl>
        <button type="button" className="mt-3 h-[72px] w-full rounded-[10px] border-2 border-[#0072bd] bg-white text-[32px] text-[#0072bd]">
          Mark Activity Complete
        </button>
      </section>

      <div className="ml-[29px] h-px shrink-0 bg-[#c8c7cc]" />
      <ul>
        {DETAILS.map((row) => (
          <li key={row.label}>
            <div className={row.muted ? 'flex h-[87px] items-center justify-between pr-5 pl-[19px] text-[33px] font-light text-[#929292]' : 'flex h-[87px] items-center justify-between pr-5 pl-[19px] text-[33px] font-light'}>
              <span>{row.label}</span>
              {row.link ? (
                <a href={`#${row.label.toLowerCase().replace(' ', '-')}`} className="flex items-center gap-[42px] pr-8">
                  {row.value}
                  <svg width="17" height="24" viewBox="0 0 17 24" fill="none" stroke="#aaa" strokeWidth="4">
                    <path d="M2 2 14 12 2 22" />
                  </svg>
                </a>
              ) : (
                <span className={row.muted ? 'font-normal italic' : ''}>{row.value}</span>
              )}
            </div>
            <div className="ml-[29px] h-px bg-[#c8c7cc]" />
          </li>
        ))}
      </ul>
    </main>
  );
}

export default function App() {
  return (
    <div className="relative flex h-screen overflow-hidden bg-white font-['Inter',sans-serif]">
      <StatusBar />
      <Sidebar />
      <DetailPane />
    </div>
  );
}
